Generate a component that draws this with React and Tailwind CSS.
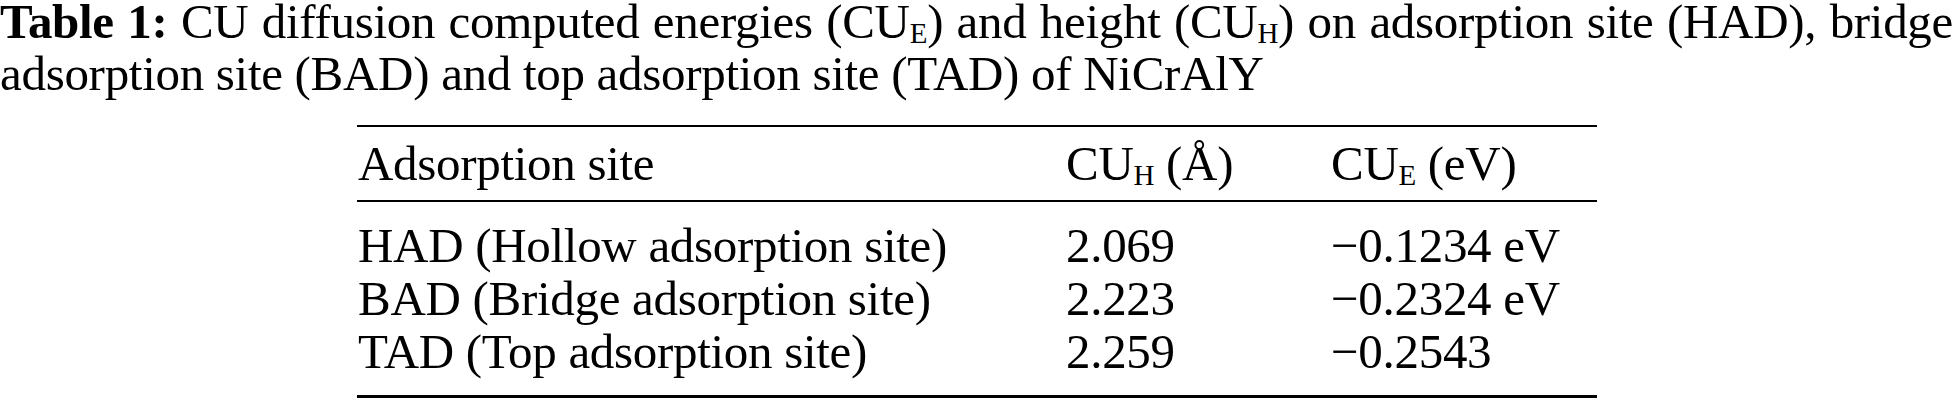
import React from 'react';

const serif = { fontFamily: '"Liberation Serif", "Times New Roman", serif' };

const rows = [
    { site: 'HAD (Hollow adsorption site)', h: '2.069', e: '\u22120.1234 eV' },
    { site: 'BAD (Bridge adsorption site)', h: '2.223', e: '\u22120.2324 eV' },
    { site: 'TAD (Top adsorption site)', h: '2.259', e: '\u22120.2543' },
];

const Sub = ({ children }) => (
    <sub className="text-[29px] relative top-[5px] align-baseline">{children}</sub>
);

const App = () => {
    return (
        <div className="w-[1954px] h-[404px] bg-white text-black overflow-hidden" style={serif}>
            {/* Caption */}
            <p className="w-[1953px] text-[49px] leading-[52px] tracking-[-0.3px] text-justify -mt-[4px]">
                <span className="font-bold">Table 1:</span> CU diffusion computed energies (CU<Sub>E</Sub>) and height (CU<Sub>H</Sub>) on adsorption site (HAD), bridge adsorption site (BAD) and top adsorption site (TAD) of NiCrAlY
            </p>

            {/* Table */}
            <div className="ml-[357px] w-[1240px] mt-[25px] border-t-2 border-b-[3px] border-black text-[49px] tracking-[-0.3px]">
                <div className="flex items-center h-[75px] border-b-2 border-black leading-[52px]">
                    <div className="w-[709px] pl-[1px]">Adsorption site</div>
                    <div className="w-[265px]">CU<Sub>H</Sub> (Å)</div>
                    <div className="flex-1">CU<Sub>E</Sub> (eV)</div>
                </div>
                <div className="pt-[17px] pb-[17px]">
                    {rows.map((r) => (
                        <div key={r.site} className="flex h-[53px] leading-[53px]">
                            <div className="w-[709px] pl-[1px]">{r.site}</div>
                            <div className="w-[265px]">{r.h}</div>
                            <div className="flex-1">{r.e}</div>
                        </div>
                    ))}
                </div>
            </div>
        </div>
    );
};

export default App;
